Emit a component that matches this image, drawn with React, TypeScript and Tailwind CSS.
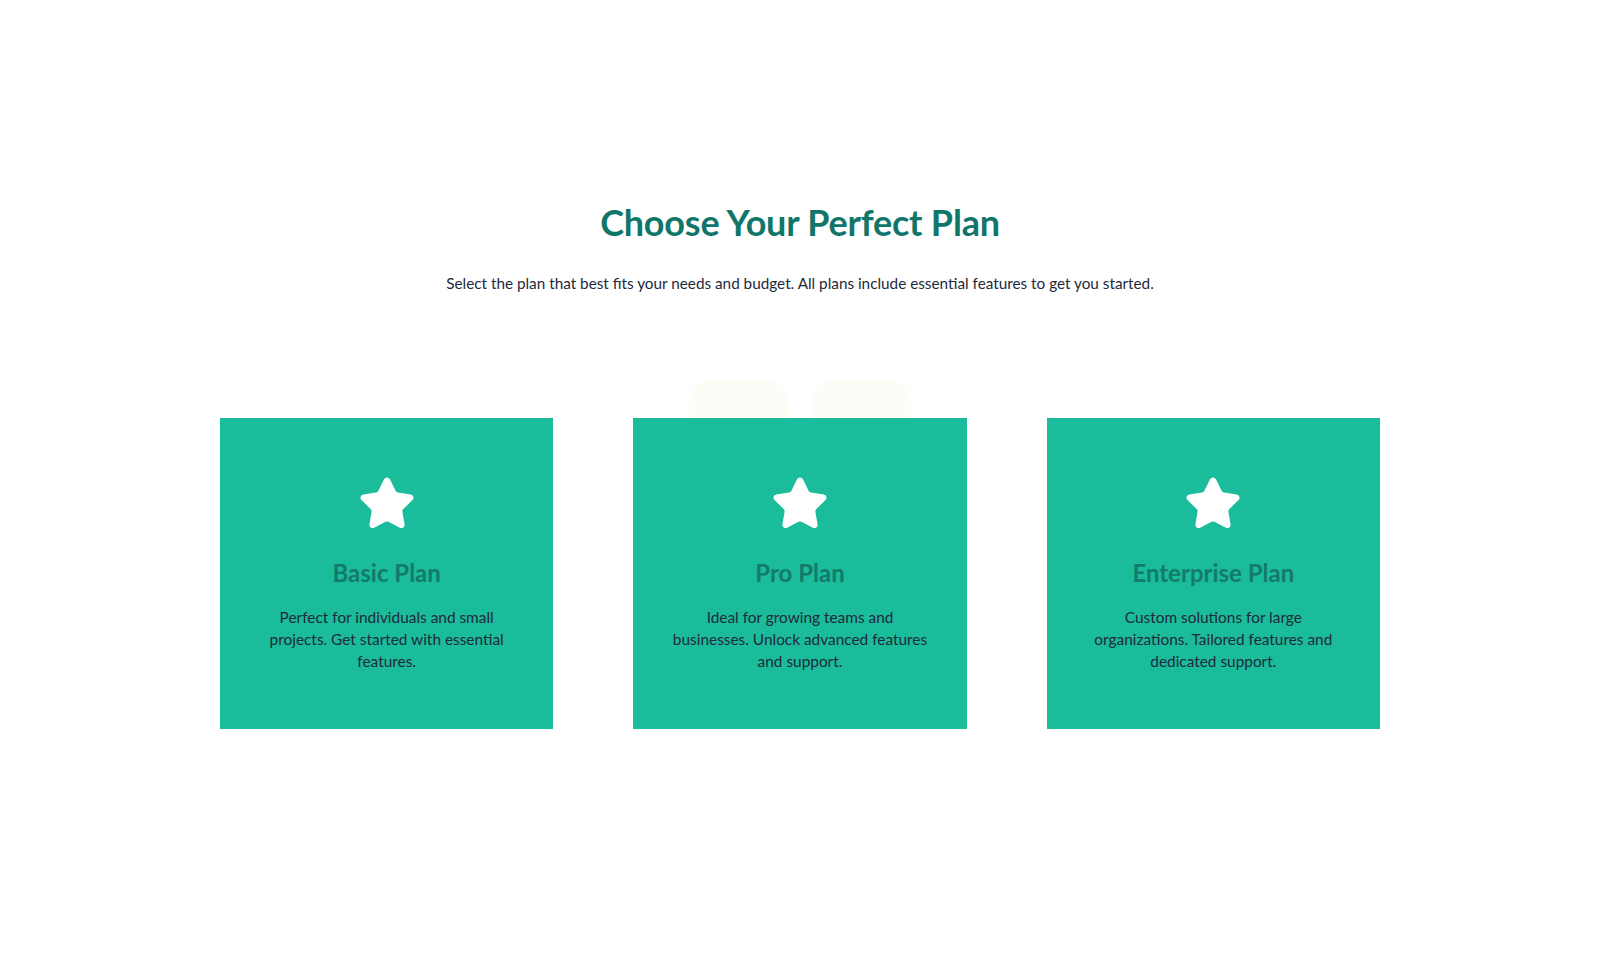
import React from "react";

const plans = [
  {
    title: "Basic Plan",
    lines: ["Perfect for individuals and small", "projects. Get started with essential", "features."],
  },
  {
    title: "Pro Plan",
    lines: ["Ideal for growing teams and", "businesses. Unlock advanced features", "and support."],
  },
  {
    title: "Enterprise Plan",
    lines: ["Custom solutions for large", "organizations. Tailored features and", "dedicated support."],
  },
];

function Star() {
  return (
    <svg width="54" height="52" viewBox="1 1 22 21.2" className="block">
      <path
        d="M11.525 2.295a.53.53 0 0 1 .95 0l2.31 4.679a2.123 2.123 0 0 0 1.595 1.16l5.166.756a.53.53 0 0 1 .294.904l-3.736 3.638a2.123 2.123 0 0 0-.611 1.878l.882 5.14a.53.53 0 0 1-.771.56l-4.618-2.428a2.122 2.122 0 0 0-1.973 0L6.396 21.01a.53.53 0 0 1-.77-.56l.881-5.139a2.122 2.122 0 0 0-.611-1.879L2.16 9.795a.53.53 0 0 1 .294-.906l5.165-.755a2.122 2.122 0 0 0 1.597-1.16z"
        fill="#ffffff"
        stroke="#ffffff"
        strokeWidth="1.6"
        strokeLinejoin="round"
      />
    </svg>
  );
}

export default function App() {
  return (
    <div
      className="min-h-[978px] w-full bg-white"
      style={{ fontFamily: "Lato, 'Noto Sans', sans-serif" }}
    >
      <section className="flex flex-col items-center pt-[202px]">
        <h1 className="text-[36px] leading-[40px] font-bold text-[#10766a] tracking-[-0.2px]">
          Choose Your Perfect Plan
        </h1>
        <p className="mt-[29px] text-[15.3px] leading-[24px] text-[#1e293b]">
          Select the plan that best fits your needs and budget. All plans include essential features to get you started.
        </p>

        <div className="relative mt-[123px] w-[1160px]">
          <div className="absolute left-[469px] top-[-39px] h-[80px] w-[100px] rounded-[24px] bg-[#fdfcf6]" />
          <div className="absolute left-[591px] top-[-39px] h-[80px] w-[100px] rounded-[24px] bg-[#fdfcf6]" />
          <div className="relative grid grid-cols-3 gap-[80px]">
            {plans.map((p) => (
              <div
                key={p.title}
                className="flex h-[311px] flex-col items-center bg-[#1abc9c] px-[24px] pt-[59px] text-center"
              >
                <Star />
                <h3 className="mt-[28px] text-[24px] leading-[32px] font-bold text-[#147a6b]">
                  {p.title}
                </h3>
                <p className="mt-[17px] text-[15.4px] leading-[22px] text-[#1f2a3a]">
                  {p.lines.map((l, i) => (
                    <React.Fragment key={i}>
                      {l}
                      {i < p.lines.length - 1 && <br />}
                    </React.Fragment>
                  ))}
                </p>
              </div>
            ))}
          </div>
        </div>
      </section>
    </div>
  );
}
